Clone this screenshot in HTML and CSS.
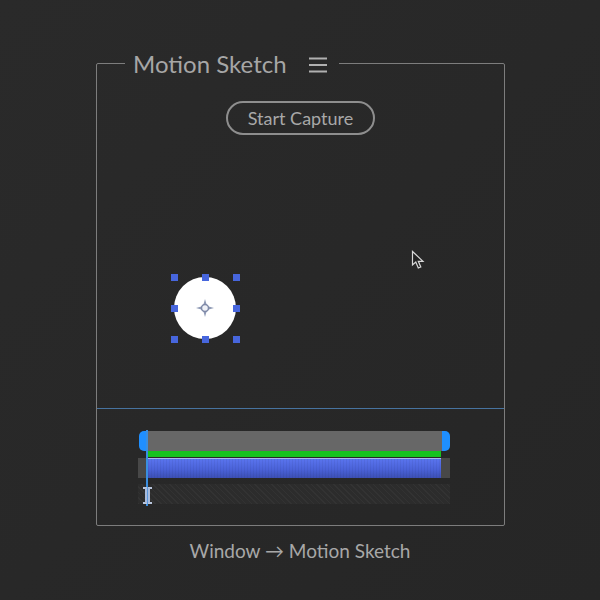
FILE: index.html
```html
<!DOCTYPE html>
<html lang="en">
<head>
    <meta charset="UTF-8">
    <title>Motion Sketch</title>
    <link rel="stylesheet" href="styles.css">
</head>
<body>
    <div class="container">
        <fieldset class="panel">
            <legend class="panel-title">
                <span>Motion Sketch</span>
                <svg class="menu-icon" width="18" height="16" viewBox="0 0 18 16">
                    <path d="M0 1.500H18M0 8H18M0 14.500H18" stroke="#b0b0b0" stroke-width="2" fill="none"/>
                </svg>
            </legend>

            <div class="stage">
                <button class="capture-btn">Start Capture</button>
                <div class="stage-row">
                    <div class="shape">
                        <svg class="anchor" width="20" height="20" viewBox="0 0 20 20">
                            <path d="M10 1L12 8L19 10L12 12L10 19L8 12L1 10L8 8Z" fill="#8f9ab5"/>
                            <circle cx="10" cy="10" r="3.500" fill="#eef0f6" stroke="#7f8aa8" stroke-width="1.500"/>
                        </svg>
                        <i class="handle h-tl"></i>
                        <i class="handle h-tc"></i>
                        <i class="handle h-tr"></i>
                        <i class="handle h-ml"></i>
                        <i class="handle h-mr"></i>
                        <i class="handle h-bl"></i>
                        <i class="handle h-bc"></i>
                        <i class="handle h-br"></i>
                    </div>
                    <svg class="cursor" width="14" height="20" viewBox="0 0 14 20">
                        <path d="M1.500 1.500V15L4.800 12L7.300 18L9.800 17L7.300 11.300H12Z" fill="#222" stroke="#d8d8d8" stroke-width="1.200"/>
                    </svg>
                </div>
            </div>

            <div class="timeline">
                <div class="layer layer-top">
                    <span class="grip grip-left"></span>
                    <div class="layer-bar"></div>
                    <span class="grip grip-right"></span>
                </div>
                <div class="layer layer-blue">
                    <div class="layer-fill"></div>
                </div>
                <div class="layer layer-dim"></div>
                <div class="playhead"></div>
                <svg class="ibeam" width="9" height="17" viewBox="0 0 9 17">
                    <path d="M0 1H9M0 16H9" stroke="#b9c6dc" stroke-width="2" fill="none"/>
                    <rect x="2" y="1" width="5" height="15" fill="#a9bcdc"/>
                    <rect x="4" y="0" width="1" height="17" fill="#5b97dc"/>
                </svg>
            </div>
        </fieldset>

        <p class="caption">Window → Motion Sketch</p>
    </div>
</body>
</html>
```

FILE: styles.css
```css
* {
    margin: 0;
    padding: 0;
    box-sizing: border-box;
}

body {
    background-color: #282828;
    background-image: linear-gradient(135deg, #2a2a2a 0%, #282828 50%, #262626 100%);
    color: #a8a8a8;
    font-family: 'Lato', sans-serif;
    height: 600px;
    overflow: hidden;
}

.container {
    width: 408px;
    margin: 0 auto;
    padding-top: 47px;
}

.panel {
    border: 1px solid #7d7d7d;
    border-radius: 2px;
    height: 479px;
}

.panel-title {
    display: flex;
    align-items: center;
    margin-left: 28px;
    padding: 0 12px 0 8px;
    font-size: 24px;
    line-height: 33px;
    color: #a6a6a6;
}

.menu-icon {
    margin-left: 22px;
    margin-top: 3px;
}

.stage {
    height: 329px;
    border-bottom: 1px solid #47739f;
    display: flex;
    flex-direction: column;
    align-items: center;
}

.capture-btn {
    margin-top: 21px;
    width: 149px;
    height: 34px;
    border: 2px solid #8e8e8e;
    border-radius: 17px;
    background: transparent;
    color: #a8a8a8;
    font-family: inherit;
    font-size: 18px;
}

.stage-row {
    align-self: stretch;
    display: flex;
    align-items: flex-start;
    margin-top: 142px;
    padding-left: 77px;
}

.shape {
    position: relative;
    width: 62px;
    height: 62px;
    border-radius: 50%;
    background-color: #fff;
    display: flex;
    align-items: center;
    justify-content: center;
}

.handle {
    position: absolute;
    width: 7px;
    height: 7px;
    background-color: #4766dd;
}

.h-tl, .h-tr, .h-tc { top: -3.5px; }
.h-ml, .h-mr { top: 27.5px; }
.h-bl, .h-bc, .h-br { bottom: -3.5px; }
.h-tl, .h-ml, .h-bl { left: -3.5px; }
.h-tc, .h-bc { left: 27.5px; }
.h-tr, .h-mr, .h-br { right: -3.5px; }

.cursor {
    margin-left: 175px;
    margin-top: -27px;
}

.timeline {
    position: relative;
    height: 115px;
    padding: 22px 54px 0 41px;
}

.layer {
    height: 20px;
    width: 312px;
}

.layer-top {
    display: flex;
    margin-left: 1px;
    width: 311px;
}

.grip {
    width: 8px;
    background-color: #1f8fff;
}

.grip-left {
    border-radius: 5px 0 0 5px;
}

.grip-right {
    border-radius: 0 5px 5px 0;
}

.layer-bar {
    flex: 1;
    background-color: #676767;
}

.layer-blue {
    margin-top: 7px;
    background-color: #484848;
    padding: 0 9px 0 10px;
    position: relative;
}

.layer-blue::before {
    content: "";
    position: absolute;
    left: 10px;
    right: 9px;
    top: -7px;
    height: 6px;
    background-color: #16c21f;
}

.layer-fill {
    height: 100%;
    border-top: 1px solid #a9b8f0;
    background-image:
        repeating-linear-gradient(90deg, rgba(0, 0, 0, 0.05) 0 1px, transparent 1px 3px),
        linear-gradient(#5a74ee 0%, #4a62d8 55%, #3c4fb4 100%);
}

.layer-dim {
    margin-top: 6px;
    background-color: #2c2c2c;
    background-image: repeating-linear-gradient(45deg, rgba(255, 255, 255, 0.03) 0 1px, transparent 1px 4px);
}

.playhead {
    position: absolute;
    left: 49px;
    top: 21px;
    width: 2px;
    height: 76px;
    background-color: #3a8ee0;
}

.ibeam {
    position: absolute;
    left: 46px;
    top: 78px;
}

.caption {
    margin-top: 12px;
    text-align: center;
    font-size: 19px;
    line-height: 26px;
    color: #a8a8a8;
}
```
